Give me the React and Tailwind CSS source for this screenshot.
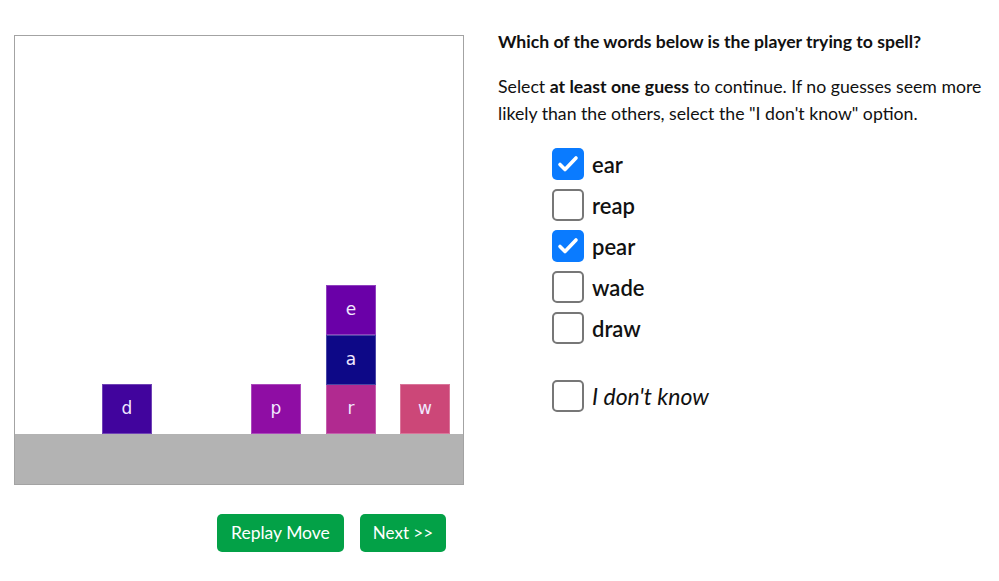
import React, { useState } from 'react';

const blocks = [
  { letter: 'd', left: 87, top: 348, color: 'bg-[#41049d]' },
  { letter: 'p', left: 236, top: 348, color: 'bg-[#8f0da4]' },
  { letter: 'r', left: 311, top: 348, color: 'bg-[#b12a90]' },
  { letter: 'a', left: 311, top: 299, color: 'bg-[#0d0887]' },
  { letter: 'e', left: 311, top: 249, color: 'bg-[#6a00a8]' },
  { letter: 'w', left: 385, top: 348, color: 'bg-[#cc4778]' },
];

const words = ['ear', 'reap', 'pear', 'wade', 'draw'];

const Check = ({ checked, onClick }) => (
  <button
    onClick={onClick}
    className={
      checked
        ? 'w-[32px] h-[32px] rounded-[5px] bg-[#0a7bff] flex items-center justify-center shrink-0'
        : 'w-[32px] h-[32px] rounded-[5px] border-2 border-[#777] bg-white shrink-0'
    }
  >
    {checked && (
      <svg width="24" height="24" viewBox="0 0 24 24" fill="none">
        <path d="M4 12.5l5 5L20 6" stroke="white" strokeWidth="3.6" strokeLinecap="round" strokeLinejoin="round" />
      </svg>
    )}
  </button>
);

const App = () => {
  const [selected, setSelected] = useState({ ear: true, pear: true });
  const [dontKnow, setDontKnow] = useState(false);

  const toggle = (w) => setSelected({ ...selected, [w]: !selected[w] });

  return (
    <div className="w-[999px] h-[581px] bg-white flex font-['Lato','Noto_Sans',sans-serif] text-[#111]">
      {/* game board */}
      <div className="pl-[14px] pt-[35px] w-[498px] shrink-0">
        <div className="w-[450px] h-[450px] border border-[#a3a3a3] flex flex-col">
          <div className="relative flex-1">
            {blocks.map((b) => (
              <div
                key={b.letter}
                className={`absolute w-[50px] h-[50px] border border-white/25 flex items-center justify-center text-[#f0e8ff] text-[17px] font-['DejaVu_Sans',sans-serif] ${b.color}`}
                style={{ left: b.left, top: b.top }}
              >
                {b.letter}
              </div>
            ))}
          </div>
          <div className="h-[50px] bg-[#b3b3b3]"></div>
        </div>
        <div className="flex gap-4 ml-[203px] mt-[29px]">
          <button className="h-[38px] px-[14px] rounded-[5px] bg-[#03a147] text-white text-[17.5px]">
            Replay Move
          </button>
          <button className="h-[38px] px-[13px] rounded-[5px] bg-[#03a147] text-white text-[17px]">
            Next &gt;&gt;
          </button>
        </div>
      </div>

      {/* question panel */}
      <div className="pt-[29px] pr-2 flex-1">
        <h2 className="text-[17.6px] leading-[26px] font-bold">
          Which of the words below is the player trying to spell?
        </h2>
        <p className="mt-[18px] text-[17.7px] leading-[27px]">
          Select <strong className="font-bold">at least one guess</strong> to continue. If no guesses seem more
          likely than the others, select the "I don't know" option.
        </p>
        <div className="ml-[54px] mt-[21px] flex flex-col gap-[9px]">
          {words.map((w) => (
            <div key={w} className="flex items-center gap-2 h-[32px]">
              <Check checked={!!selected[w]} onClick={() => toggle(w)} />
              <span className="text-[22px] font-semibold">{w}</span>
            </div>
          ))}
          <div className="flex items-center gap-2 h-[32px] mt-[27px]">
            <Check checked={dontKnow} onClick={() => setDontKnow(!dontKnow)} />
            <span className="text-[23px] italic">I don't know</span>
          </div>
        </div>
      </div>
    </div>
  );
};

export default App;
